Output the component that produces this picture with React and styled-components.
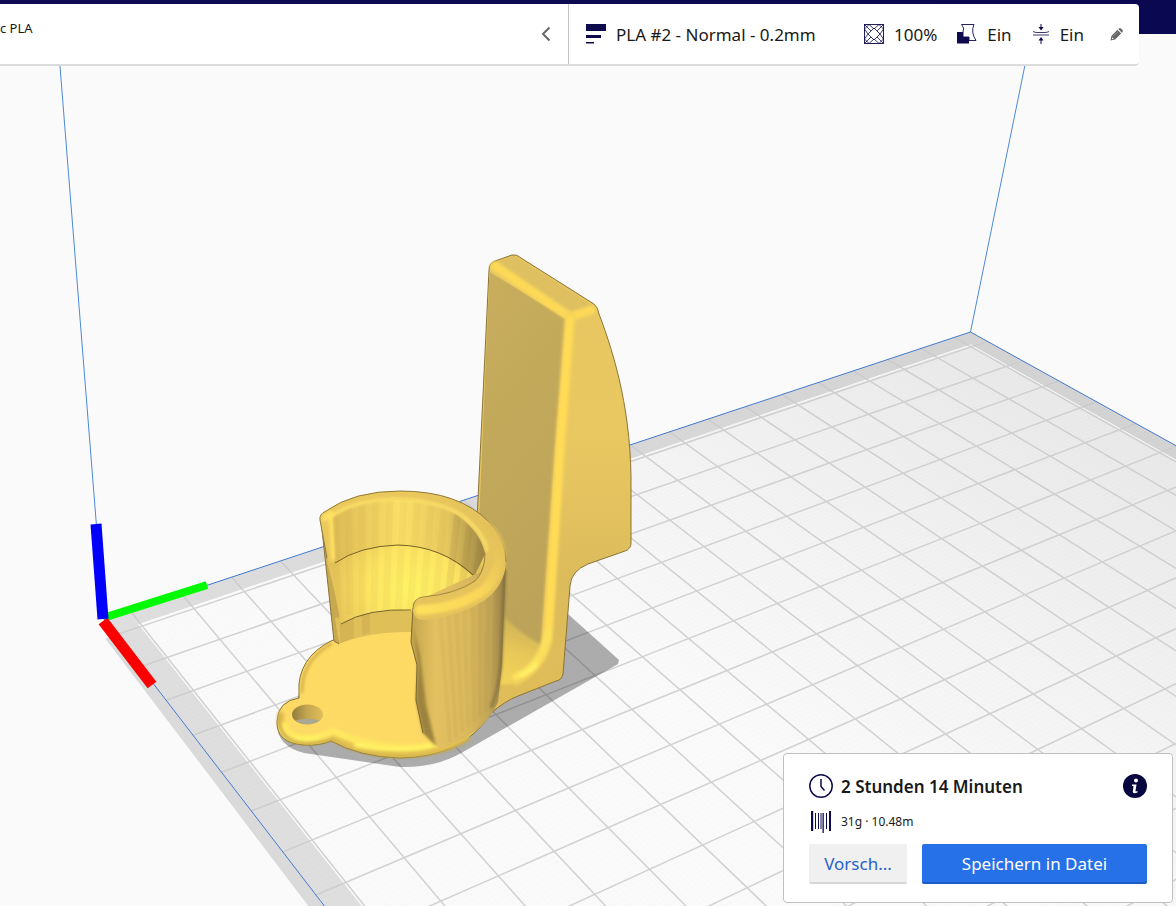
import React from "react";
import styled, { createGlobalStyle } from "styled-components";

const GlobalStyle = createGlobalStyle`
  * {
    box-sizing: border-box;
  }
  body {
    margin: 0;
    background: #fafafa;
    color: #191919;
    font-family: "Noto Sans", "Open Sans", sans-serif;
    font-size: 16px;
  }
  button {
    font: inherit;
    padding: 0;
    border: 0;
    background: none;
    cursor: pointer;
  }
`;

const Page = styled.div`
  position: relative;
  display: flex;
  flex-direction: column;
  min-height: 100vh;
  overflow: hidden;
`;

const Viewport = styled.svg`
  position: absolute;
  inset: 0;
  width: 100%;
  height: 100%;
`;

const Header = styled.header`
  position: relative;
  padding: 4px 37px 0 0;
  background: linear-gradient(90deg, #100b52, #0a0850) top / 100% 34px no-repeat;
`;

const Stage = styled.div`
  display: flex;
  height: 62px;
  background: #fff;
  border-bottom: 2px solid #dcdcdc;
  border-radius: 0 4px 4px 0;
`;

const Material = styled.div`
  flex: 1;
  display: flex;
  justify-content: space-between;
  padding: 0 16px 0 0;
  border-right: 1px solid #c4c4c4;
`;

const MaterialName = styled.span`
  padding-top: 15px;
  font-size: 13px;
  line-height: 18px;
`;

const IconButton = styled.button`
  display: flex;
  align-items: center;
  justify-content: center;
`;

const Settings = styled.div`
  flex: 0 0 570px;
  display: flex;
  align-items: center;
  gap: 20px;
  padding: 0 16px;
  font-size: 17px;
`;

const Setting = styled.div`
  display: flex;
  align-items: center;
  gap: 10px;
  margin-right: ${(props) => (props.$wide ? "auto" : "0")};
`;

const EditButton = styled(IconButton)`
  margin-left: 6px;
`;

const Panel = styled.section`
  position: relative;
  display: flex;
  flex-direction: column;
  align-self: flex-end;
  gap: 10px;
  width: 390px;
  margin: auto 3px 3px 0;
  padding: 20px 25px 18px;
  background: #fff;
  border: 1px solid #c0c0c0;
  border-radius: 4px;
`;

const PanelRow = styled.div`
  display: flex;
  align-items: flex-start;
  gap: 8px;
`;

const Time = styled.strong`
  flex: 1;
  font-size: 17px;
  font-weight: 600;
  line-height: 26px;
`;

const Usage = styled.span`
  font-size: 12px;
  line-height: 24px;
`;

const Buttons = styled.div`
  display: flex;
  gap: 15px;
`;

const Button = styled.button`
  flex: ${(props) => (props.$primary ? "1" : "0 0 98px")};
  height: 40px;
  font-size: 17px;
  color: ${(props) => (props.$primary ? "#fff" : "#2a62c8")};
  background: ${(props) => (props.$primary ? "#2670e8" : "#f0f0f0")};
  border-bottom: 2px solid ${(props) => (props.$primary ? "#1c5cc4" : "#d6d6d6")};
  border-radius: 2px;
`;

const NAVY = "#0d0b4c";

// Bed coordinates are in 10mm cells, u along the back edge, v towards the viewer
const project = (u, v) => {
  const w = 1 + 0.01323 * u - 0.0228 * v;
  const x = (104 + 54.1 * u + 21.06 * v) / w;
  const y = (619.5 - 9.3 * u + 16.33 * v) / w;
  return `${x.toFixed(1)} ${y.toFixed(1)}`;
};

const BED_W = 21;
const BED_D = 25;

const quad = (u0, v0, u1, v1) =>
  `M${project(u0, v0)}L${project(u1, v0)}L${project(u1, v1)}L${project(u0, v1)}Z`;

const gridPath = (step) => {
  let d = "";
  for (let u = 0.5; u <= BED_W; u += step) {
    d += `M${project(u, 0)}L${project(u, BED_D)}`;
  }
  for (let v = 0.5; v <= BED_D; v += step) {
    d += `M${project(0, v)}L${project(BED_W, v)}`;
  }
  return d;
};

function Bed() {
  return (
    <g>
      <path d={quad(0, 0, BED_W, BED_D)} fill="url(#margin)" />
      <path d={quad(-0.2, 0.5, 0, BED_D)} fill="#dadada" />
      <path d={quad(0.47, 0.43, 20.55, BED_D)} fill="url(#bed)" stroke="#fbfbfb" />
      <path d={gridPath(0.1)} stroke="#000" strokeOpacity="0.012" fill="none" />
      <path d={gridPath(1)} stroke="#cacaca" strokeOpacity="0.85" strokeWidth="1.500" fill="none" />
      <path
        d={`M${project(0, BED_D)}L${project(0, 0)}L${project(BED_W, 0)}L${project(BED_W, BED_D)}`}
        fill="none"
        stroke="#4279cf"
      />
      <path d="M59.500 60L96.500 526M1026 60L970.500 332" stroke="#4b8ad8" fill="none" />
      <path d="M106 617L207 585" stroke="#00fb00" strokeWidth="8" />
      <path d="M103 621L152 685" stroke="#fb0000" strokeWidth="11" />
      <path d="M96 524L103 619" stroke="#0000fb" strokeWidth="11" />
    </g>
  );
}

const FACETS = Array.from({ length: 12 }, (_, i) => i);

function Model() {
  return (
    <g strokeLinejoin="round">
      <path
        d="M560 604L568 614L619 660L618 664L463 752Q436 768 400 767L304 753Q277 746 277 724L330 680L297 702L300 690L400 640Z"
        fill="#000"
        fillOpacity="0.31"
      />

      {/* handle */}
      <path
        d="M489 270Q489 263 495 261L512 255Q517 254 521 258L594 304Q598 307 599 314C615 356 632 414 631 490L631 543Q631 549 625 551L588 564Q571 571 570 586L563 674Q562 680 556 681L518 696Q505 701 490 714L460 700L477 520Z"
        fill="url(#side)"
        stroke="#8a7437"
      />
      <path d="M491 267L495 262L514 256L595 307L570 317Z" fill="#dfc061" />
      <path d="M489.500 272L566 319L556 440L541 648L498 622L477.500 560Z" fill="url(#face)" />
      <path d="M500 612Q517 632 543 646Q545 664 525 680Q508 686 498 684Z" fill="url(#fillet)" filter="url(#soft)" />
      <g filter="url(#soft)" fill="none" strokeLinecap="round">
        <path d="M495 266L570 317L591 310" stroke="#fdd957" strokeWidth="9" strokeLinejoin="round" />
        <path d="M570 319L560 450L547 640Q543 664 516 680" stroke="#f0cd5a" strokeWidth="11" />
        <path d="M570 319L560 450L548 640" stroke="#ffdb57" strokeWidth="8" />
        <path d="M548 632Q543 666 516 677" stroke="#fbe05c" strokeWidth="8" />
        <path d="M536 665Q528 673 521 675" stroke="#fff065" strokeWidth="5" />
      </g>

      {/* base with its eyelet */}
      <path
        d="M340 637Q302 652 299 684L299 698Q278 701 277 721Q276 743 304 745Q319 746 331 741Q360 757 400 758Q462 757 490 715L502 640L410 620Z"
        fill="#fdda64"
        stroke="#83702f"
      />
      <g filter="url(#soft)" fill="none" strokeLinecap="round">
        <path d="M331 644Q302 660 302 692" stroke="#d5b34e" strokeWidth="3" />
        <path d="M281 715Q279 741 308 741Q324 740 332 735Q365 752 405 753Q440 752 466 738" stroke="#e2c050" strokeWidth="7" />
        <path d="M285 725Q288 738 308 738Q324 737 333 731Q365 747 405 748Q430 747 450 740" stroke="#ffe760" strokeWidth="7" />
        <path d="M296 738Q308 741 318 737M356 745Q398 753 430 746" stroke="#fff364" strokeWidth="4" />
        <path d="M279 714Q277 744 311 744Q325 742 332 740Q362 757 402 757Q445 757 470 739" stroke="#b2963f" strokeWidth="1.500" />
      </g>
      <ellipse cx="307.500" cy="714.500" rx="15.500" ry="10" fill="url(#hole)" />
      <path d="M295 720.500Q307 717 320 720.500Q308 728 295 720.500Z" fill="#aaa795" />

      {/* cup, inside */}
      <path d="M321 520L334 641L339 644L341 618L336 560L400 500Z" fill="#c9a950" stroke="#87733a" />
      <path d="M335 618L339 644Q370 631 413 632L414 606Z" fill="#dfbf58" />
      <path d="M340 622V643L354 638V615ZM362 612V635L370 633V610Z" fill="#b89944" fillOpacity="0.25" />
      <path
        d="M332 516Q355 500 395 499Q470 502 486 552Q484 580 450 594L418 598L412 611Q370 606 341 624Q335 590 327 562Z"
        fill="url(#inside)"
      />
      <path d="M332 516Q355 500 395 499Q470 502 486 552L474 577Q440 545 395 545Q360 546 334 563Z" fill="url(#band)" />
      <g clipPath="url(#cupClip)">
        {FACETS.map((i) => (
          <path
            key={i}
            d={`M${334 + i * 14} 495L${338 + i * 12} 615`}
            stroke={i > 8 ? "#806c38" : "#b8983c"}
            strokeOpacity={i > 8 ? 0.12 : 0.08}
            strokeWidth="7"
          />
        ))}
      </g>
      <path d="M335 563Q360 546 398 545Q442 546 473 575" fill="none" stroke="#665420" strokeWidth="0.900" />
      <path d="M341 624Q368 608 411 610" fill="none" stroke="#79652b" />

      {/* cup, outer wall */}
      <path
        d="M413 603L411 642L417 665L416 700L423 733L440 749Q484 735 498 702L502 665L506 560Z"
        fill="url(#wall)"
      />
      {FACETS.slice(0, 8).map((i) => (
        <path
          key={i}
          d={`M${440 + i * 8} ${614 - i * 5}L${450 + i * 6} ${742 - i * 5}`}
          stroke="#8a7338"
          strokeOpacity="0.06"
          strokeWidth="4"
        />
      ))}
      <path d="M413 626L418 665L416 700L423 733L436 746L426 705L420 655Z" fill="#9c833e" filter="url(#soft)" />
      <path d="M413 608L411 642L417 665L416 700L423 733" fill="none" stroke="#7d6930" />
      <path d="M505 570L501 665Q498 692 491 708" fill="none" stroke="#7c693a" strokeWidth="2" filter="url(#soft)" />

      {/* cup, rim */}
      <path
        d="M320 520Q319 514 326 511Q354 491 400 491Q459 491 489 522Q506 541 506 562Q505 585 485 600Q461 616 424 620Q413 620 413 609Q413 598 423 597Q456 594 475 581Q485 572 485 553Q480 531 457 515Q431 500 395 500Q356 501 336 514Q332 518 333 526L335 560Q331 567 327 558Z"
        fill="url(#rim)"
      />
      <path d="M327 558L320 520Q319 514 326 511Q354 491 400 491Q459 491 489 522Q506 541 506 562" fill="none" stroke="#8f7937" />
      <path d="M413 609Q413 598 423 597Q456 594 475 581Q485 572 485 553" fill="none" stroke="#8f7937" strokeWidth="0.800" />
      <g filter="url(#soft)" fill="none" strokeLinecap="round">
        <path d="M334 515Q356 500 395 499Q434 500 460 514Q484 532 487 550" stroke="#ffe66a" strokeWidth="2.500" />
        <path d="M331 519L333 558" stroke="#ffe062" strokeWidth="4" />
        <path d="M420 610Q459 608 484 590Q500 574 500 550Q498 536 486 526" stroke="url(#rimLight)" strokeWidth="10" />
        <path d="M325 518L331 514" stroke="#ffe263" strokeWidth="6" />
      </g>
    </g>
  );
}

function Scene() {
  return (
    <Viewport viewBox="0 0 1176 906" preserveAspectRatio="xMinYMin slice" aria-hidden="true">
      <defs>
        <linearGradient id="margin" gradientUnits="userSpaceOnUse" x1="970" y1="330" x2="400" y2="906">
          <stop offset="0" stopColor="#d4d4d4" />
          <stop offset="1" stopColor="#dedede" />
        </linearGradient>
        <linearGradient id="bed" gradientUnits="userSpaceOnUse" x1="1000" y1="340" x2="760" y2="740">
          <stop offset="0" stopColor="#e9e9e9" />
          <stop offset="0.6" stopColor="#f4f4f4" />
          <stop offset="1" stopColor="#fafafa" />
        </linearGradient>
        <linearGradient id="side" x1="0" y1="0" x2="0" y2="1">
          <stop offset="0" stopColor="#e7c661" />
          <stop offset="0.4" stopColor="#e9c862" />
          <stop offset="0.7" stopColor="#dcbb5b" />
          <stop offset="1" stopColor="#dfbd58" />
        </linearGradient>
        <linearGradient id="face" x1="0" y1="0" x2="0.3" y2="1">
          <stop offset="0" stopColor="#c9ae5d" />
          <stop offset="0.5" stopColor="#c1a85a" />
          <stop offset="1" stopColor="#bca359" />
        </linearGradient>
        <linearGradient id="fillet" x1="0.6" y1="0" x2="0.4" y2="1">
          <stop offset="0.1" stopColor="#cdb057" />
          <stop offset="0.6" stopColor="#e8c958" />
          <stop offset="1" stopColor="#f2d25a" />
        </linearGradient>
        <linearGradient id="hole">
          <stop offset="0" stopColor="#917c3e" />
          <stop offset="0.5" stopColor="#c5a751" />
          <stop offset="1" stopColor="#dfbe58" />
        </linearGradient>
        <radialGradient id="inside" gradientUnits="userSpaceOnUse" cx="412" cy="588" r="85">
          <stop offset="0" stopColor="#fff266" />
          <stop offset="0.5" stopColor="#fde562" />
          <stop offset="1" stopColor="#e2c058" />
        </radialGradient>
        <linearGradient id="band">
          <stop offset="0" stopColor="#dbba56" />
          <stop offset="0.45" stopColor="#fbdf66" />
          <stop offset="0.75" stopColor="#e5c65e" />
          <stop offset="1" stopColor="#9a8343" />
        </linearGradient>
        <linearGradient id="wall">
          <stop offset="0" stopColor="#c4a54e" />
          <stop offset="0.25" stopColor="#e3c161" />
          <stop offset="0.6" stopColor="#dab95c" />
          <stop offset="0.85" stopColor="#bfa256" />
          <stop offset="1" stopColor="#8f7a44" />
        </linearGradient>
        <linearGradient id="rim" x1="0" y1="0" x2="1" y2="1">
          <stop offset="0" stopColor="#eccb5b" />
          <stop offset="0.5" stopColor="#e6c45d" />
          <stop offset="1" stopColor="#e5c15a" />
        </linearGradient>
        <linearGradient id="rimLight" gradientUnits="userSpaceOnUse" x1="415" y1="610" x2="500" y2="540">
          <stop offset="0" stopColor="#ffe05b" />
          <stop offset="0.55" stopColor="#fad659" />
          <stop offset="1" stopColor="#e3c15a" />
        </linearGradient>
        <clipPath id="cupClip">
          <path d="M332 516Q355 500 395 499Q470 502 486 552Q484 580 450 594L418 598L412 611Q370 606 341 624Q335 590 330 562Z" />
        </clipPath>
        <filter id="soft" x="-20%" y="-20%" width="140%" height="140%">
          <feGaussianBlur stdDeviation="1.400" />
        </filter>
      </defs>
      <Bed />
      <Model />
    </Viewport>
  );
}

const ChevronIcon = () => (
  <svg width="12" height="16" viewBox="0 0 12 16" fill="none" stroke="#666" strokeWidth="2">
    <path d="M9.500 1.500L3 8L9.500 14.500" />
  </svg>
);

const ProfileIcon = () => (
  <svg width="21" height="20" viewBox="0 0 21 20" fill={NAVY}>
    <path d="M1 0h20v7H1zM1 11h15v3H1zM1 18h8v1.500H1z" />
  </svg>
);

const InfillIcon = () => (
  <svg width="20" height="20" viewBox="0 0 20 20" fill="none" stroke={NAVY}>
    <rect x="0.500" y="0.500" width="19" height="19" strokeWidth="0.900" />
    <path
      d="M5 0.500L0.500 5M15 0.500L19.500 5M0.500 15L5 19.500M19.500 15L15 19.500M0.500 0.500L7 7M19.500 0.500L13 7M0.500 19.500L7 13M19.500 19.500L13 13M5 0.500L10 5L15 0.500M0.500 5L4 10L0.500 15M19.500 5L16 10L19.500 15M5 19.500L10 15L15 19.500M10 4L16 10L10 16L4 10Z"
      strokeWidth="0.800"
    />
  </svg>
);

const SupportIcon = () => (
  <svg width="20" height="20" viewBox="0 0 20 20">
    <path d="M0 8h6v5h6v6.500H0z" fill={NAVY} />
    <path d="M4.500 0.500H17Q13.500 8 19 16.500H12V13H6V8Q8 4 4.500 0.500Z" fill="#fff" stroke={NAVY} strokeWidth="0.900" />
  </svg>
);

const AdhesionIcon = () => (
  <svg width="18" height="20" viewBox="0 0 18 20" fill={NAVY}>
    <path d="M8.500 0h1v3h2L9 6.500L6.500 3h2zM8.500 20h1v-3.500h2L9 13L6.500 16.500h2z" />
    <path d="M1 7.500Q3 8.500 5 8.500H13Q15 8.500 17 7.500M1 11H17" stroke={NAVY} strokeWidth="0.800" fill="none" />
  </svg>
);

const PencilIcon = () => (
  <svg width="13" height="13" viewBox="0 0 14 14" fill="#666">
    <path d="M1.500 8.500L8 2L12 6L5.500 12.500L0.500 13.500ZM9 1.200L10 0.300Q11 -0.300 12 0.700L13.300 2Q14.200 3 13.500 4L12.700 5Z" />
    <path d="M2.500 10L4 11.500L2 12.200Z" fill="#fff" />
    <path d="M4 8.500L9 3.700" stroke="#aaa" strokeWidth="0.700" />
  </svg>
);

const ClockIcon = () => (
  <svg width="24" height="24" viewBox="0 0 24 24" fill="none" stroke={NAVY} strokeWidth="1.500">
    <circle cx="12" cy="12" r="11.200" />
    <path d="M12 5V12.500L15.500 16.500" />
  </svg>
);

const SpoolIcon = () => (
  <svg width="24" height="24" viewBox="0 0 24 24" fill={NAVY}>
    <path d="M2 1h2.200v20H2zM20 1h2v20h-2zM6 3h1v16H6zM9 3h1v16H9zM11.500 3h1v16h-1zM13.500 3h1.300v20h-1.300zM17 3h1v16h-1z" />
  </svg>
);

const InfoIcon = () => (
  <svg width="24" height="24" viewBox="0 0 24 24">
    <circle cx="12" cy="12" r="12" fill="#08063f" />
    <circle cx="13" cy="6.500" r="2" fill="#fff" />
    <path d="M9 10.500H13.500L12.500 17Q12.500 17.800 14.500 17V18.500Q9.500 20.500 9.800 17.500L10.500 12H9Z" fill="#fff" />
  </svg>
);

function TopBar() {
  return (
    <Header>
      <Stage>
        <Material>
          <MaterialName>c PLA</MaterialName>
          <IconButton type="button" aria-label="Zurück">
            <ChevronIcon />
          </IconButton>
        </Material>
        <Settings>
          <Setting $wide>
            <ProfileIcon />
            PLA #2 - Normal - 0.2mm
          </Setting>
          <Setting>
            <InfillIcon />
            100%
          </Setting>
          <Setting>
            <SupportIcon />
            Ein
          </Setting>
          <Setting>
            <AdhesionIcon />
            Ein
          </Setting>
          <EditButton type="button" aria-label="Bearbeiten">
            <PencilIcon />
          </EditButton>
        </Settings>
      </Stage>
    </Header>
  );
}

function ActionPanel() {
  return (
    <Panel>
      <PanelRow>
        <ClockIcon />
        <Time>2 Stunden 14 Minuten</Time>
        <IconButton type="button" aria-label="Info">
          <InfoIcon />
        </IconButton>
      </PanelRow>
      <PanelRow>
        <SpoolIcon />
        <Usage>31g · 10.48m</Usage>
      </PanelRow>
      <Buttons>
        <Button type="button">Vorsch...</Button>
        <Button type="button" $primary>
          Speichern in Datei
        </Button>
      </Buttons>
    </Panel>
  );
}

export default function App() {
  return (
    <Page>
      <GlobalStyle />
      <Scene />
      <TopBar />
      <ActionPanel />
    </Page>
  );
}
